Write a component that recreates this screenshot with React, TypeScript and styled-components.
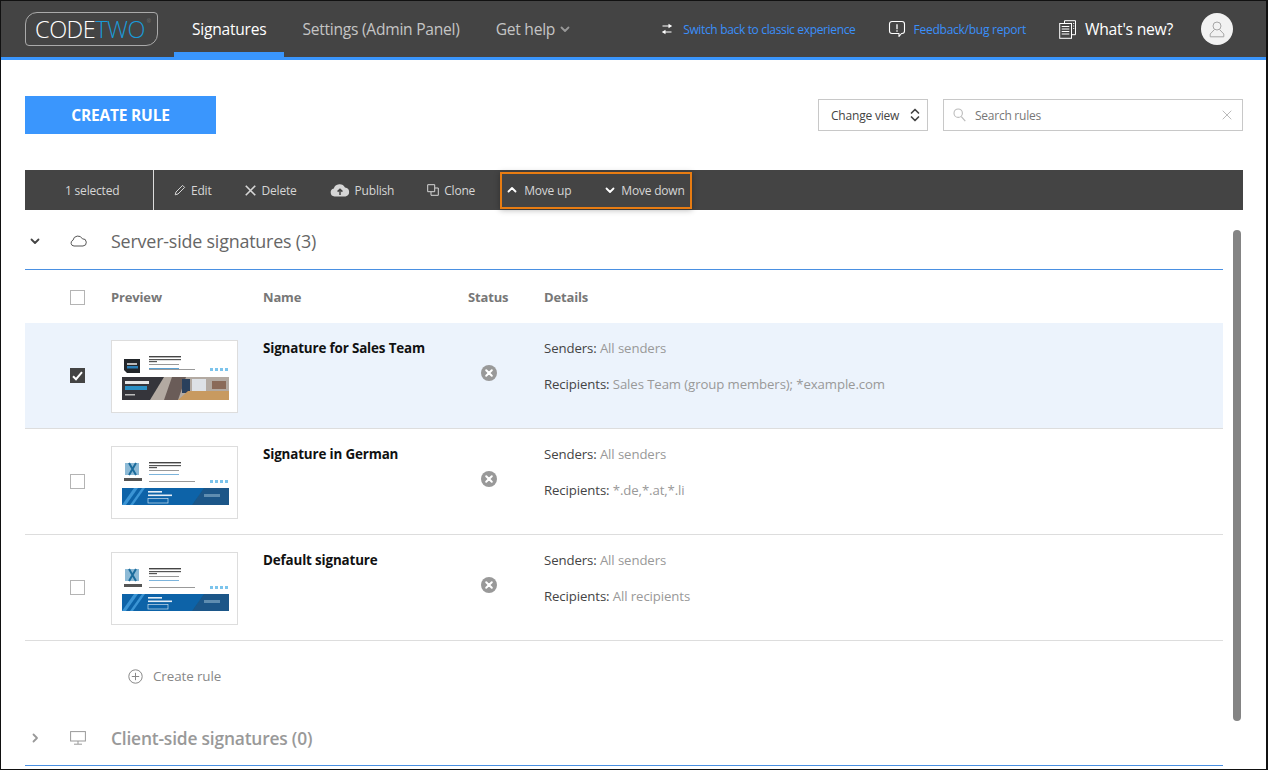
import React from "react";
import styled, { createGlobalStyle } from "styled-components";

const GlobalStyle = createGlobalStyle`
  html, body { margin: 0; padding: 0; background: #fff; height: 100%; overflow: hidden; }
  body { font-family: "Open Sans", "Noto Sans", sans-serif; color: #444; }
  * { box-sizing: border-box; }
`;

const Frame = styled.div`
  position: relative;
  width: 1268px;
  height: 770px;
  overflow: hidden;
  background: #fff;
  border-style: solid;
  border-color: #111;
  border-width: 1px 2px 1px 1px;
`;

const Header = styled.header`
  display: flex;
  align-items: stretch;
  height: 59px;
  background: #444;
  border-bottom: 3px solid #3a96fd;
  padding-left: 24px;
`;

const Logo = styled.div`
  position: relative;
  display: flex;
  align-items: center;
  justify-content: center;
  align-self: flex-start;
  width: 133px;
  height: 34px;
  margin-top: 11px;
  margin-right: 16px;
  padding-right: 3px;
  border: 1.5px solid #aaa;
  border-radius: 12px 4px 12px 4px;
  font-weight: 300;
  font-size: 23.5px;
  letter-spacing: -0.5px;
  color: #fff;
`;

const LogoAccent = styled.span`
  color: #1a9ad8;
`;

const LogoMark = styled.sup`
  position: absolute;
  top: 6px;
  right: 6px;
  font-size: 5px;
  letter-spacing: 0;
  line-height: 1;
  color: #999;
`;

const Tab = styled.a<{ $active?: boolean }>`
  display: flex;
  align-items: center;
  gap: 5px;
  height: 56px;
  margin-bottom: -3px;
  padding: 5px 18px 0;
  font-size: 15.6px;
  letter-spacing: -0.25px;
  color: ${(p) => (p.$active ? "#fff" : "#c4c4c4")};
  border-bottom: 5px solid ${(p) => (p.$active ? "#3a96fd" : "transparent")};
`;

const HeaderRight = styled.div`
  display: flex;
  align-items: center;
  margin-left: auto;
  padding-right: 33px;
`;

const HeaderLink = styled.a<{ $gap: number; $end: number; $tight?: boolean }>`
  display: flex;
  align-items: center;
  gap: ${(p) => p.$gap}px;
  margin-right: ${(p) => p.$end}px;
  font-size: 12px;
  letter-spacing: ${(p) => (p.$tight ? -0.34 : -0.25)}px;
  color: #3a8ffa;
`;

const WhatsNew = styled.a`
  display: flex;
  align-items: center;
  gap: 9px;
  margin-right: 28px;
  font-size: 15.7px;
  letter-spacing: -0.25px;
  color: #fff;
`;

const Avatar = styled.div`
  display: flex;
  align-items: center;
  justify-content: center;
  width: 32px;
  height: 32px;
  border-radius: 50%;
  background: #f2f2f2;
`;

const Content = styled.main`
  padding: 36px 23px 0 24px;
`;

const TopRow = styled.div`
  display: flex;
  align-items: center;
  height: 38px;
  margin-bottom: 36px;
`;

const CreateButton = styled.button`
  width: 191px;
  height: 38px;
  border: 0;
  background: #3a96fd;
  color: #fff;
  font-family: inherit;
  font-weight: 700;
  font-size: 15.5px;
  letter-spacing: -0.2px;
`;

const ViewSelect = styled.div`
  display: flex;
  align-items: center;
  justify-content: space-between;
  width: 110px;
  height: 32px;
  margin-left: auto;
  padding: 0 7px 0 12px;
  border: 1px solid #c8c8c8;
  font-size: 12px;
  letter-spacing: -0.2px;
  color: #444;
`;

const SearchBox = styled.div`
  display: flex;
  align-items: center;
  width: 300px;
  height: 32px;
  margin-left: 15px;
  padding: 0 10px 0 9px;
  border: 1px solid #c8c8c8;
  font-size: 12px;
  letter-spacing: -0.25px;
  color: #777;
`;

const SearchLabel = styled.span`
  flex: 1;
  margin-left: 9px;
`;

const Toolbar = styled.div`
  display: flex;
  align-items: center;
  width: 1218px;
  height: 40px;
  background: #444;
  color: #d6d6d6;
  font-size: 12px;
  letter-spacing: -0.2px;
`;

const SelectedCount = styled.div`
  display: flex;
  align-items: center;
  width: 129px;
  height: 100%;
  padding-left: 40px;
  border-right: 1px solid #ddd;
`;

const ToolButton = styled.a<{ $left: number; $gap?: number }>`
  display: flex;
  align-items: center;
  gap: ${(p) => p.$gap ?? 5}px;
  margin-left: ${(p) => p.$left}px;
`;

const Highlight = styled.div`
  display: flex;
  align-items: center;
  width: 192px;
  height: 37px;
  margin-left: 25px;
  border: 2px solid #e87c12;
  box-shadow: 0 1px 6px rgba(0, 0, 0, 0.3);
`;

const SectionHead = styled.div<{ $muted?: boolean; $height: number }>`
  display: flex;
  align-items: center;
  width: 1198px;
  height: ${(p) => p.$height}px;
  padding-left: 5px;
  padding-top: ${(p) => (p.$muted ? 0 : 2)}px;
  border-bottom: 1px solid #4a90e2;
  font-size: ${(p) => (p.$muted ? 17.4 : 17.9)}px;
  letter-spacing: -0.2px;
  font-weight: ${(p) => (p.$muted ? 600 : 400)};
  color: ${(p) => (p.$muted ? "#999" : "#666")};
`;

const SectionIcon = styled.span`
  display: flex;
  justify-content: center;
  width: 40px;
  margin-left: 18px;
  margin-right: 13px;
`;

const ChevronSlot = styled.span`
  display: flex;
  width: 10px;
`;

const Table = styled.div`
  width: 1198px;
`;

const columns = "86px 152px 205px 76px 1fr";

const HeadRow = styled.div`
  display: grid;
  grid-template-columns: ${columns};
  align-items: center;
  height: 53px;
  padding-top: 1px;
  font-size: 13px;
  font-weight: 700;
  letter-spacing: -0.15px;
  color: #777;
`;

const Row = styled.div<{ $selected?: boolean }>`
  display: grid;
  grid-template-columns: ${columns};
  height: 106px;
  border-bottom: 1px solid #ddd;
  background: ${(p) => (p.$selected ? "#ecf3fc" : "#fff")};
`;

const CheckCell = styled.div`
  display: flex;
  align-items: center;
  padding-left: 45px;
`;

const Checkbox = styled.span<{ $checked?: boolean }>`
  display: flex;
  align-items: center;
  justify-content: center;
  width: 15px;
  height: 15px;
  border: 1px solid ${(p) => (p.$checked ? "#444" : "#b4b4b4")};
  background: ${(p) => (p.$checked ? "#444" : "#fff")};
`;

const Thumb = styled.div`
  width: 127px;
  height: 73px;
  margin-top: 17px;
  background: #fff;
  border: 1px solid #ddd;
  overflow: hidden;
`;

const RuleName = styled.div`
  padding-top: 17px;
  font-size: 13.4px;
  line-height: 17px;
  font-weight: 700;
  letter-spacing: -0.15px;
  color: #111;
`;

const StatusCell = styled.div`
  display: flex;
  align-items: center;
  height: 100px;
  padding-left: 13px;
`;

const Details = styled.div`
  display: flex;
  flex-direction: column;
  gap: 19px;
  padding-top: 17px;
  font-size: 13.2px;
  line-height: 17px;
  letter-spacing: -0.1px;
  color: #999;
`;

const DetailLabel = styled.span`
  color: #444;
`;

const CreateLink = styled.a`
  display: flex;
  align-items: center;
  gap: 10px;
  height: 70px;
  padding-left: 103px;
  font-size: 13.4px;
  letter-spacing: -0.1px;
  color: #888;
`;

const ScrollThumb = styled.div`
  position: absolute;
  left: 1232px;
  top: 229px;
  width: 8px;
  height: 491px;
  border-radius: 4px;
  background: #848484;
`;

const stroke = { fill: "none", strokeLinecap: "round", strokeLinejoin: "round" } as const;

const Chevron = ({ dir, color = "#fff" }: { dir: "up" | "down" | "right"; color?: string }) => {
  const d = dir === "up" ? "M1.5 6.5 5 3l3.5 3.5" : dir === "down" ? "M1.5 3.5 5 7l3.5-3.5" : "M3.5 1.5 7 5 3.5 8.5";
  return (
    <svg width="10" height="10" viewBox="0 0 10 10">
      <path d={d} {...stroke} stroke={color} strokeWidth="1.8" />
    </svg>
  );
};

const SwitchIcon = () => (
  <svg width="12" height="12" viewBox="0 0 12 12" fill="#fff">
    <path d="M7.5 0.8 11.2 3 7.5 5.2V3.6H1.5V2.4h6zM4.5 6.8V8.4h6v1.2h-6v1.6L0.8 9z" />
  </svg>
);

const FeedbackIcon = () => (
  <svg width="18" height="18" viewBox="0 0 18 18">
    <path d="M4 1.5h10a2.5 2.5 0 0 1 2.5 2.5v7a2.5 2.5 0 0 1-2.5 2.5h-.5L11 16.5v-3H4A2.5 2.5 0 0 1 1.5 11V4A2.5 2.5 0 0 1 4 1.5z" {...stroke} stroke="#fff" strokeWidth="1.1" />
    <path d="M9 4.2v5" stroke="#fff" strokeWidth="1.3" />
    <path d="M9 10.3v1.4" stroke="#fff" strokeWidth="1.3" />
  </svg>
);

const NewsIcon = () => (
  <svg width="17" height="19" viewBox="0 0 17 19">
    <path d="M5.5 3V.7h11v14H13" fill="none" stroke="#fff" strokeWidth="1" />
    <rect x=".7" y="3.5" width="11.8" height="14.8" fill="#444" stroke="#fff" strokeWidth="1" />
    <path d="M2.7 6.5h7.6M2.7 9h7.6M2.7 11.5h7.6M2.7 14h7.6" stroke="#fff" strokeWidth="1" />
    <path d="M14.2 3.5h1M14.2 6h1M14.2 8.5h1" stroke="#fff" strokeWidth="1" />
  </svg>
);

const UserIcon = () => (
  <svg width="16" height="18" viewBox="0 0 16 18">
    <circle cx="8" cy="6" r="4" fill="none" stroke="#a6a6a6" strokeWidth="1" />
    <path d="M5.5 9.5 1.2 14v2.8h13.6V14L10.5 9.5" fill="none" stroke="#a6a6a6" strokeWidth="1" />
  </svg>
);

const UpDownIcon = () => (
  <svg width="10" height="14" viewBox="0 0 10 14">
    <path d="M1.5 5 5 1.5 8.5 5M1.5 9 5 12.5 8.5 9" {...stroke} stroke="#444" strokeWidth="1.7" />
  </svg>
);

const SearchIcon = () => (
  <svg width="13" height="14" viewBox="0 0 13 14">
    <circle cx="5.2" cy="5.2" r="4.2" fill="none" stroke="#bbb" strokeWidth="1.1" />
    <path d="m8.3 8.6 4 4.6" stroke="#bbb" strokeWidth="1.2" />
  </svg>
);

const CloseIcon = ({ size = 10, color = "#bbb", width = 1 }: { size?: number; color?: string; width?: number }) => (
  <svg width={size} height={size} viewBox="0 0 10 10">
    <path d="M.7.7l8.6 8.6M9.3.7.7 9.3" stroke={color} strokeWidth={width} />
  </svg>
);

const PencilIcon = () => (
  <svg width="12" height="12" viewBox="0 0 12 12">
    <path d="M1.2 10.8 2 8l6.6-6.6 2 2L4 10z" fill="none" stroke="#d6d6d6" strokeWidth="1" strokeLinejoin="round" />
  </svg>
);

const UploadCloudIcon = () => (
  <svg width="20" height="14" viewBox="0 0 20 14">
    <path fill="#d6d6d6" d="M4.5 13.5A4 4 0 0 1 3.8 5.6 6 6 0 0 1 15 4.6a4.5 4.5 0 0 1 .5 8.9z" />
    <path d="M10 12V6.5M7.6 8.6 10 6.2l2.4 2.4" fill="none" stroke="#444" strokeWidth="1.5" />
  </svg>
);

const CloneIcon = () => (
  <svg width="12" height="12" viewBox="0 0 12 12">
    <path d="M.7.7h7v7h-7z" fill="none" stroke="#d6d6d6" strokeWidth="1" />
    <path d="M8 4h3.3v7.3H4V8" fill="none" stroke="#d6d6d6" strokeWidth="1" />
  </svg>
);

const CloudIcon = () => (
  <svg width="17" height="12" viewBox="0 0 17 12">
    <path d="M4 11A3 3 0 0 1 3 5.2 5 5 0 0 1 12.4 3.8 3.6 3.6 0 0 1 13 11z" fill="none" stroke="#555" strokeWidth="1" />
  </svg>
);

const MonitorIcon = () => (
  <svg width="16" height="14" viewBox="0 0 16 14">
    <rect x=".6" y=".6" width="14.8" height="9.4" fill="none" stroke="#999" strokeWidth="1" />
    <path d="M8 10v3M4 13.2h8" stroke="#999" strokeWidth="1" />
  </svg>
);

const PlusCircleIcon = () => (
  <svg width="15" height="15" viewBox="0 0 15 15">
    <circle cx="7.5" cy="7.5" r="6.7" fill="none" stroke="#888" strokeWidth="1" />
    <path d="M7.5 3.8v7.4M3.8 7.5h7.4" stroke="#888" strokeWidth="1" />
  </svg>
);

const StatusIcon = () => (
  <svg width="16" height="16" viewBox="0 0 16 16">
    <circle cx="8" cy="8" r="8" fill="#999" />
    <path d="M5.2 5.2l5.6 5.6M10.8 5.2l-5.6 5.6" stroke="#fff" strokeWidth="2" strokeLinecap="round" />
  </svg>
);

const CheckMark = () => (
  <svg width="11" height="10" viewBox="0 0 11 10">
    <path d="M1 5.2 4 8.2 10 1.2" fill="none" stroke="#fff" strokeWidth="2" />
  </svg>
);

// tiny signature previews, blurred like the downscaled images in the app
const SignatureLines = ({ accent, socialY }: { accent: string; socialY: number }) => (
  <g>
    <rect x="37" y="15" width="32" height="1.4" fill="#444" />
    <rect x="37" y="18" width="32" height="1.2" fill="#555" />
    <rect x="37" y="20" width="8" height="1.2" fill="#555" />
    <rect x="37" y="23" width="30" height="1" fill="#999" />
    <rect x="37" y="27" width="30" height="1" fill={accent} />
    <rect x="37" y={socialY + 1} width="46" height="1" fill="#999" />
    <g fill="#7cc4ec">
      <rect x="98" y={socialY} width="3" height="3" />
      <rect x="103" y={socialY} width="3" height="3" />
      <rect x="108" y={socialY} width="3" height="3" />
      <rect x="113" y={socialY} width="3" height="3" />
    </g>
  </g>
);

const SalesThumb = () => (
  <svg width="125" height="71" viewBox="0 0 125 71">
    <defs>
      <filter id="soft-a"><feGaussianBlur stdDeviation="0.7" /></filter>
    </defs>
    <g filter="url(#soft-a)">
      <path d="M12 18h16v14H15l-3-3z" fill="#23262b" />
      <rect x="15" y="22" width="10" height="2" fill="#bbb" />
      <rect x="15" y="25" width="11" height="2.5" fill="#2b7fb8" />
      <SignatureLines accent="#5a9fd0" socialY={27} />
      <rect x="10" y="36" width="107" height="23" fill="#34363a" />
      <path d="M38 59 52 36h65v23z" fill="#b3aaa2" />
      <path d="M52 59 60 36h14l-8 23z" fill="#6a5c58" />
      <rect x="70" y="38" width="8" height="14" fill="#2a3f5c" />
      <rect x="80" y="38" width="14" height="13" fill="#dde1e6" />
      <path d="M66 59 76 50h41v9z" fill="#c89a60" />
      <rect x="100" y="40" width="14" height="8" fill="#8a6a58" />
      <rect x="13" y="40" width="24" height="3" fill="#e6e6e6" />
      <rect x="13" y="45" width="22" height="4" fill="#2b8fc4" />
      <rect x="13" y="53" width="10" height="1.5" fill="#bbb" />
    </g>
  </svg>
);

const CompanyThumb = ({ id }: { id: string }) => (
  <svg width="125" height="71" viewBox="0 0 125 71">
    <defs>
      <filter id={id}><feGaussianBlur stdDeviation="0.7" /></filter>
    </defs>
    <g filter={`url(#${id})`}>
      <rect x="13" y="16" width="14" height="12" fill="#8dbad6" />
      <path d="M17 16l7 12M24 16l-7 12" stroke="#1c6c9c" strokeWidth="2" />
      <rect x="12" y="31" width="18" height="3" fill="#555" />
      <SignatureLines accent="#7cb4dc" socialY={33} />
      <rect x="10" y="41" width="107" height="17" fill="#0a63a8" />
      <path d="M10 58 22 41h4L14 58z" fill="#3a94d4" />
      <path d="M18 58 30 41h3L21 58z" fill="#3a94d4" />
      <path d="M80 58 92 41h25v17z" fill="#1a5788" />
      <rect x="92" y="47" width="16" height="3" fill="#5f8db0" />
      <rect x="36" y="44" width="14" height="1.6" fill="#e6eef6" />
      <rect x="36" y="47.5" width="24" height="1.6" fill="#e6eef6" />
      <rect x="36" y="51.5" width="20" height="4.5" fill="none" stroke="#cfe0ee" strokeWidth=".7" />
    </g>
  </svg>
);

type Rule = {
  name: string;
  senders: string;
  recipients: string;
  selected?: boolean;
  thumb: React.ReactNode;
};

const rules: Rule[] = [
  {
    name: "Signature for Sales Team",
    senders: "All senders",
    recipients: "Sales Team (group members); *example.com",
    selected: true,
    thumb: <SalesThumb />,
  },
  {
    name: "Signature in German",
    senders: "All senders",
    recipients: "*.de,*.at,*.li",
    thumb: <CompanyThumb id="soft-b" />,
  },
  {
    name: "Default signature",
    senders: "All senders",
    recipients: "All recipients",
    thumb: <CompanyThumb id="soft-c" />,
  },
];

const App: React.FC = () => (
  <Frame>
    <GlobalStyle />
    <Header>
      <Logo>
        CODE<LogoAccent>TWO</LogoAccent>
        <LogoMark>®</LogoMark>
      </Logo>
      <Tab $active>Signatures</Tab>
      <Tab>Settings (Admin Panel)</Tab>
      <Tab>
        Get help <Chevron dir="down" color="#999" />
      </Tab>
      <HeaderRight>
        <HeaderLink $gap={10} $end={32} $tight>
          <SwitchIcon />
          Switch back to classic experience
        </HeaderLink>
        <HeaderLink $gap={8} $end={33}>
          <FeedbackIcon />
          Feedback/bug report
        </HeaderLink>
        <WhatsNew>
          <NewsIcon />
          What's new?
        </WhatsNew>
        <Avatar>
          <UserIcon />
        </Avatar>
      </HeaderRight>
    </Header>
    <Content>
      <TopRow>
        <CreateButton>CREATE RULE</CreateButton>
        <ViewSelect>
          Change view
          <UpDownIcon />
        </ViewSelect>
        <SearchBox>
          <SearchIcon />
          <SearchLabel>Search rules</SearchLabel>
          <CloseIcon />
        </SearchBox>
      </TopRow>
      <Toolbar>
        <SelectedCount>1 selected</SelectedCount>
        <ToolButton $left={20}>
          <PencilIcon />
          Edit
        </ToolButton>
        <ToolButton $left={33} $gap={6}>
          <CloseIcon size={11} color="#d6d6d6" width={1.5} />
          Delete
        </ToolButton>
        <ToolButton $left={33}>
          <UploadCloudIcon />
          Publish
        </ToolButton>
        <ToolButton $left={33}>
          <CloneIcon />
          Clone
        </ToolButton>
        <Highlight>
          <ToolButton $left={5} $gap={7}>
            <Chevron dir="up" />
            Move up
          </ToolButton>
          <ToolButton $left={34} $gap={6}>
            <Chevron dir="down" />
            Move down
          </ToolButton>
        </Highlight>
      </Toolbar>
      <SectionHead $height={60}>
        <ChevronSlot>
          <Chevron dir="down" color="#444" />
        </ChevronSlot>
        <SectionIcon>
          <CloudIcon />
        </SectionIcon>
        Server-side signatures (3)
      </SectionHead>
      <Table>
        <HeadRow>
          <CheckCell>
            <Checkbox />
          </CheckCell>
          <span>Preview</span>
          <span>Name</span>
          <span>Status</span>
          <span>Details</span>
        </HeadRow>
        {rules.map((rule) => (
          <Row key={rule.name} $selected={rule.selected}>
            <CheckCell>
              <Checkbox $checked={rule.selected}>{rule.selected && <CheckMark />}</Checkbox>
            </CheckCell>
            <Thumb>{rule.thumb}</Thumb>
            <RuleName>{rule.name}</RuleName>
            <StatusCell>
              <StatusIcon />
            </StatusCell>
            <Details>
              <span>
                <DetailLabel>Senders:</DetailLabel> {rule.senders}
              </span>
              <span>
                <DetailLabel>Recipients:</DetailLabel> {rule.recipients}
              </span>
            </Details>
          </Row>
        ))}
      </Table>
      <CreateLink>
        <PlusCircleIcon />
        Create rule
      </CreateLink>
      <SectionHead $muted $height={55}>
        <ChevronSlot>
          <Chevron dir="right" color="#999" />
        </ChevronSlot>
        <SectionIcon>
          <MonitorIcon />
        </SectionIcon>
        Client-side signatures (0)
      </SectionHead>
    </Content>
    <ScrollThumb />
  </Frame>
);

export default App;
